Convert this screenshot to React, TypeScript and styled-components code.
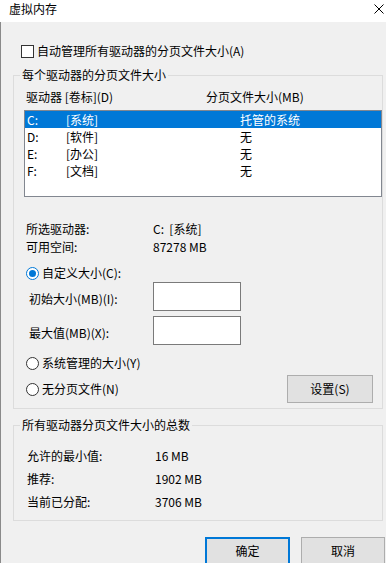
import React from "react";
import styled, { createGlobalStyle } from "styled-components";

const GlobalStyle = createGlobalStyle`
  html, body { margin: 0; padding: 0; background: #f0f0f0; overflow: hidden; }
  body {
    font-family: "Noto Sans CJK SC", "Noto Sans", sans-serif;
    font-size: 12px;
    color: #000;
  }
  * { box-sizing: border-box; }
`;

const Window = styled.div`
  width: 386px;
  height: 563px;
  display: flex;
  flex-direction: column;
  background: #f0f0f0;
  overflow: hidden;
`;

const TitleBar = styled.div`
  height: 22px;
  flex: none;
  background: #fff;
  display: flex;
  align-items: flex-start;
  justify-content: space-between;
  padding: 1px 2px 0 9px;
  line-height: 16px;
`;

const CloseIcon = styled.svg`
  width: 10px;
  height: 10px;
  margin-top: 3px;
`;

const Body = styled.div`
  flex: 1;
  border-left: 1px solid #8a8a8a;
  padding: 21px 0 0 12px;
  display: flex;
  flex-direction: column;
`;

const CheckRow = styled.label`
  display: flex;
  align-items: center;
  gap: 3px;
  height: 16px;
  line-height: 16px;
  margin-left: 8px;
`;

const CheckBox = styled.span`
  width: 13px;
  height: 13px;
  border: 1px solid #333;
  background: #fff;
  flex: none;
`;

const Group = styled.fieldset<{ $top: number }>`
  width: 370px;
  margin: ${(p) => p.$top}px 0 0 0;
  padding: 0;
  border: 1px solid #dcdcdc;
  min-width: 0;
`;

const Caption = styled.legend`
  margin-left: 6px;
  padding: 0 2px;
  height: 16px;
  line-height: 16px;
`;

const GroupContent = styled.div<{ $pt: number; $pb: number }>`
  padding: ${(p) => p.$pt}px 0 ${(p) => p.$pb}px 10px;
  display: flex;
  flex-direction: column;
`;

const HeaderRow = styled.div`
  display: grid;
  grid-template-columns: 180px 1fr;
  padding-left: 2px;
  height: 16px;
  line-height: 16px;
`;

const ListBox = styled.div`
  margin-top: 5px;
  width: 358px;
  height: 87px;
  border: 1px solid #828790;
  background: #fff;
  display: flex;
  flex-direction: column;
`;

const ListRow = styled.div<{ $selected?: boolean }>`
  display: grid;
  grid-template-columns: 39px 174px 1fr;
  padding-left: 2px;
  height: 17px;
  line-height: 17px;
  background: ${(p) => (p.$selected ? "#0078d7" : "transparent")};
  color: ${(p) => (p.$selected ? "#fff" : "#000")};
`;

const InfoRow = styled.div<{ $top?: number }>`
  display: grid;
  grid-template-columns: 127px 1fr;
  padding-left: 2px;
  height: 18px;
  line-height: 18px;
  margin-top: ${(p) => p.$top ?? 0}px;
`;

const RadioRow = styled.label<{ $top: number }>`
  display: flex;
  align-items: center;
  gap: 3px;
  height: 16px;
  line-height: 16px;
  margin: ${(p) => p.$top}px 0 0 2px;
`;

const Radio = styled.span<{ $checked?: boolean }>`
  width: 13px;
  height: 13px;
  border-radius: 50%;
  border: 1px solid ${(p) => (p.$checked ? "#0078d7" : "#333")};
  background: #fff;
  flex: none;
  display: flex;
  align-items: center;
  justify-content: center;
  &::after {
    content: "";
    width: 7px;
    height: 7px;
    border-radius: 50%;
    background: ${(p) => (p.$checked ? "#0078d7" : "transparent")};
  }
`;

const InputRow = styled.div<{ $top: number }>`
  display: grid;
  grid-template-columns: 129px 88px;
  align-items: center;
  margin-top: ${(p) => p.$top}px;
`;

const InputLabel = styled.span`
  padding: 4px 0 0 5px;
  line-height: 16px;
`;

const TextInput = styled.div`
  width: 88px;
  height: 29px;
  border: 1px solid #7a7a7a;
  background: #fff;
`;

const BottomRow = styled.div`
  display: flex;
  align-items: center;
  justify-content: space-between;
  margin-top: 4px;
  padding-right: 9px;
`;

const Button = styled.button<{ $default?: boolean; $w?: number }>`
  width: ${(p) => p.$w ?? 86}px;
  height: 28px;
  padding: 0;
  font: inherit;
  color: #000;
  background: #e1e1e1;
  border: ${(p) => (p.$default ? "2px solid #0078d7" : "1px solid #adadad")};
  line-height: 16px;
`;

const TotalRow = styled.div<{ $top: number }>`
  display: grid;
  grid-template-columns: 128px 1fr;
  padding-left: 3px;
  height: 16px;
  line-height: 16px;
  margin-top: ${(p) => p.$top}px;
`;

const ButtonBar = styled.div`
  display: flex;
  justify-content: flex-end;
  gap: 11px;
  margin-top: 16px;
  padding-right: 1px;
`;

const drives = [
  { d: "C:", label: "[系统]", size: "托管的系统", selected: true },
  { d: "D:", label: "[软件]", size: "无" },
  { d: "E:", label: "[办公]", size: "无" },
  { d: "F:", label: "[文档]", size: "无" },
];

export default function App() {
  return (
    <>
      <GlobalStyle />
      <Window>
        <TitleBar>
          <span>虚拟内存</span>
          <CloseIcon viewBox="0 0 10 10">
            <path d="M0.5 0.5 L9.5 9.5 M9.5 0.5 L0.5 9.5" stroke="#000" strokeWidth="1" fill="none" />
          </CloseIcon>
        </TitleBar>
        <Body>
          <CheckRow>
            <CheckBox />
            <span>自动管理所有驱动器的分页文件大小(A)</span>
          </CheckRow>

          <Group $top={8}>
            <Caption>每个驱动器的分页文件大小</Caption>
            <GroupContent $pt={6} $pb={5}>
              <HeaderRow>
                <span>驱动器 [卷标](D)</span>
                <span>分页文件大小(MB)</span>
              </HeaderRow>
              <ListBox>
                {drives.map((r) => (
                  <ListRow key={r.d} $selected={r.selected}>
                    <span>{r.d}</span>
                    <span>{r.label}</span>
                    <span>{r.size}</span>
                  </ListRow>
                ))}
              </ListBox>
              <InfoRow $top={23}>
                <span>所选驱动器:</span>
                <span>C:&nbsp;&nbsp;[系统]</span>
              </InfoRow>
              <InfoRow>
                <span>可用空间:</span>
                <span>87278 MB</span>
              </InfoRow>
              <RadioRow $top={9}>
                <Radio $checked />
                <span>自定义大小(C):</span>
              </RadioRow>
              <InputRow $top={1}>
                <InputLabel>初始大小(MB)(I):</InputLabel>
                <TextInput />
              </InputRow>
              <InputRow $top={5}>
                <InputLabel>最大值(MB)(X):</InputLabel>
                <TextInput />
              </InputRow>
              <RadioRow $top={10}>
                <Radio />
                <span>系统管理的大小(Y)</span>
              </RadioRow>
              <BottomRow>
                <RadioRow $top={0}>
                  <Radio />
                  <span>无分页文件(N)</span>
                </RadioRow>
                <Button>设置(S)</Button>
              </BottomRow>
            </GroupContent>
          </Group>

          <Group $top={8}>
            <Caption>所有驱动器分页文件大小的总数</Caption>
            <GroupContent $pt={15} $pb={10}>
              <TotalRow $top={0}>
                <span>允许的最小值:</span>
                <span>16 MB</span>
              </TotalRow>
              <TotalRow $top={7}>
                <span>推荐:</span>
                <span>1902 MB</span>
              </TotalRow>
              <TotalRow $top={7}>
                <span>当前已分配:</span>
                <span>3706 MB</span>
              </TotalRow>
            </GroupContent>
          </Group>

          <ButtonBar>
            <Button $default $w={85}>确定</Button>
            <Button $w={84}>取消</Button>
          </ButtonBar>
        </Body>
      </Window>
    </>
  );
}
